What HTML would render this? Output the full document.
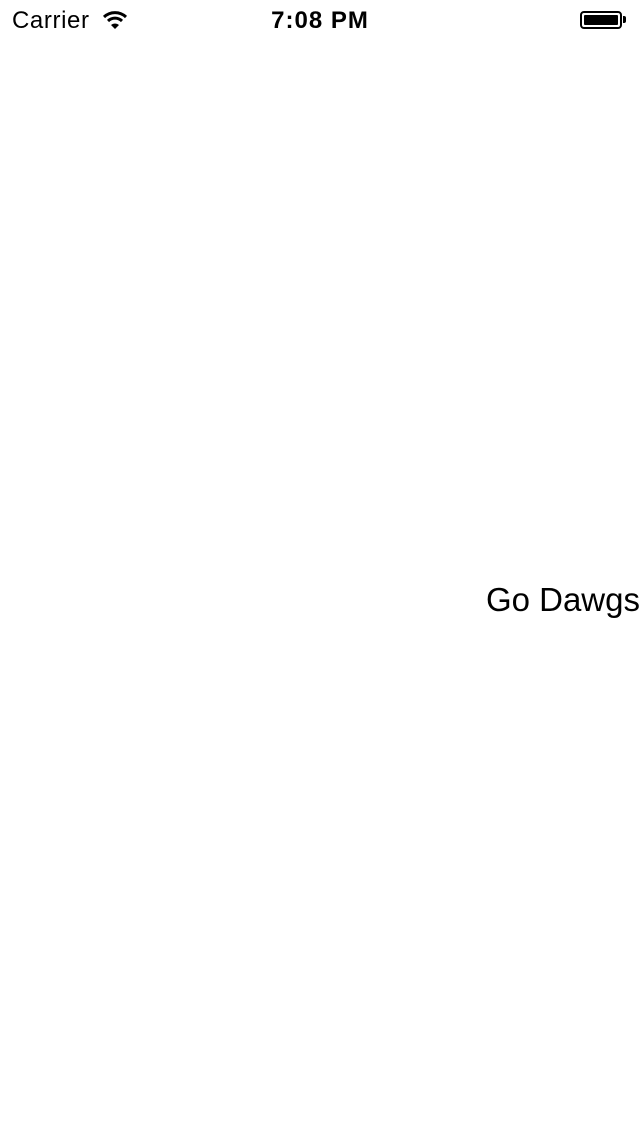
<!DOCTYPE html>
<html><head><meta charset="utf-8"><style>
html,body{margin:0;padding:0;background:#fff;width:640px;height:1136px;overflow:hidden;font-family:"Liberation Sans",sans-serif;color:#000;position:relative}
.carrier{position:absolute;left:12px;top:7px;font-size:24px;letter-spacing:0.6px}
.time{position:absolute;left:0;width:640px;text-align:center;top:7px;font-size:24px;font-weight:bold;letter-spacing:1px}
.bat{position:absolute;left:580px;top:11px;width:42px;height:18px;border:2px solid #000;border-radius:4px;box-sizing:border-box;padding:2px}
.bat i{display:block;width:100%;height:100%;background:#000;border-radius:1px}
.nub{position:absolute;left:623px;top:16px;width:3px;height:7px;background:#000;border-radius:0 2px 2px 0}
.go{position:absolute;right:0;top:581px;font-size:33px;white-space:nowrap}
</style></head><body>
<div class="carrier">Carrier</div>
<svg style="position:absolute;left:102px;top:10px" width="26" height="20" viewBox="0 0 26 20">
<path d="M2 7 A16 16 0 0 1 24 7" fill="none" stroke="#000" stroke-width="3"/>
<path d="M6 11 A10 10 0 0 1 20 11" fill="none" stroke="#000" stroke-width="3"/>
<path d="M9 15 L13 19 L17 15 A6 6 0 0 0 9 15Z" fill="#000"/>
</svg>
<div class="time">7:08 PM</div>
<div class="bat"><i></i></div><div class="nub"></div>
<div class="go">Go Dawgs</div>
</body></html>
